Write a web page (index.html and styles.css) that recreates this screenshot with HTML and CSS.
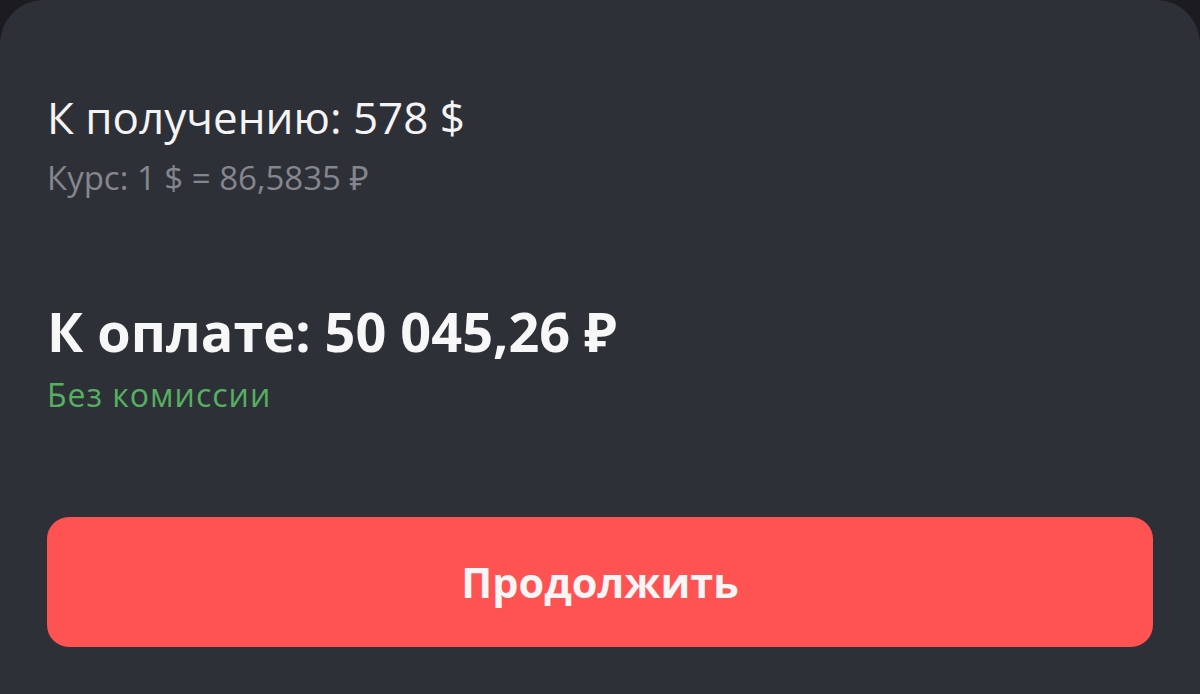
FILE: index.html
```html
<!DOCTYPE html>
<html lang="ru">
<head>
<meta charset="utf-8">
<link rel="stylesheet" href="styles.css">
</head>
<body>
<div class="sheet">
  <div class="receive">
    <div class="receive-title">К получению: 578 $</div>
    <div class="rate">Курс: 1 $ = 86,5835 ₽</div>
  </div>
  <div class="pay">
    <div class="pay-title">К оплате: 50 045,26 ₽</div>
    <div class="fee">Без комиссии</div>
  </div>
  <button class="continue">Продолжить</button>
</div>
</body>
</html>
```
FILE: styles.css
```css
html, body {
  margin: 0;
  padding: 0;
  background: #1c1b20;
  width: 1200px;
  height: 694px;
  overflow: hidden;
}
.sheet {
  box-sizing: border-box;
  width: 1200px;
  height: 694px;
  background: #2e3037;
  border-radius: 44px 44px 0 0;
  padding: 89px 47px 0 47px;
  display: flex;
  flex-direction: column;
  font-family: "Open Sans", "Noto Sans", sans-serif;
}
.receive-title {
  color: #f4f4f5;
  font-size: 44px;
  line-height: 56px;
}
.rate {
  color: #84878d;
  font-size: 33px;
  line-height: 40px;
  margin-top: 13px;
}
.pay {
  margin-top: 101px;
}
.pay-title {
  color: #f7f7f7;
  font-size: 54px;
  font-weight: 700;
  line-height: 64px;
}
.fee {
  color: #55b060;
  font-size: 32px;
  line-height: 40px;
  margin-top: 12px;
  letter-spacing: 1px;
}
.continue {
  margin-top: 102px;
  height: 130px;
  width: 1106px;
  border: none;
  border-radius: 22px;
  background: #ff5252;
  color: #fbf4f4;
  font-family: "Open Sans", "Noto Sans", sans-serif;
  font-size: 41.5px;
  font-weight: 700;
  padding: 0;
}
```
